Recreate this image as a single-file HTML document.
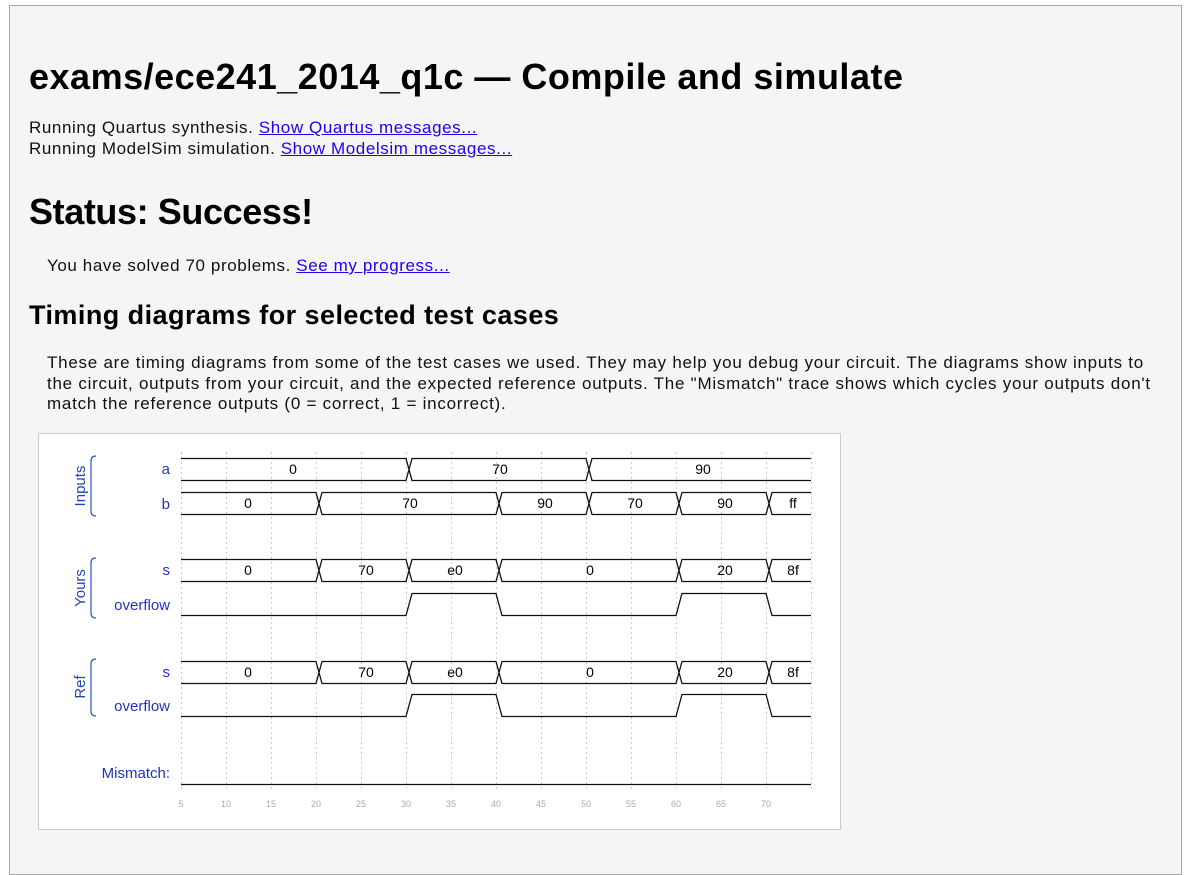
<!DOCTYPE html>
<html><head><meta charset="utf-8"><style>
html,body{margin:0;padding:0;background:#fff;}
#page{position:absolute;left:9px;top:5px;width:1173px;height:870px;background:#f5f5f5;border:1px solid #aaa;box-sizing:border-box;}
.t{position:absolute;white-space:nowrap;font-family:"Liberation Sans",sans-serif;color:#111;}
a{color:#2200ee;text-decoration:underline;}
</style></head><body>
<div id="page"></div>
<div class="t" style="left:29px;top:56px;font-size:36px;font-weight:bold;color:#000;letter-spacing:0.5px">exams/ece241_2014_q1c — Compile and simulate</div>
<div class="t" style="left:29px;top:117px;font-size:17px;line-height:21px;letter-spacing:0.6px">Running Quartus synthesis. <a>Show Quartus messages...</a><br>Running ModelSim simulation. <a>Show Modelsim messages...</a></div>
<div class="t" style="left:29px;top:191px;font-size:36px;font-weight:bold;color:#000;letter-spacing:-0.4px">Status: Success!</div>
<div class="t" style="left:47px;top:256px;font-size:17px;letter-spacing:0.6px">You have solved 70 problems. <a>See my progress...</a></div>
<div class="t" style="left:29px;top:300px;font-size:27px;font-weight:bold;color:#000;letter-spacing:0.45px">Timing diagrams for selected test cases</div>
<div class="t" style="left:47px;top:353px;font-size:17px;line-height:20.5px;letter-spacing:0.75px">These are timing diagrams from some of the test cases we used. They may help you debug your circuit. The diagrams show inputs to<br>the circuit, outputs from your circuit, and the expected reference outputs. The "Mismatch" trace shows which cycles your outputs don't<br>match the reference outputs (0 = correct, 1 = incorrect).</div>
<svg style="position:absolute;left:0;top:0" width="1192" height="866" xmlns="http://www.w3.org/2000/svg">
<rect x="38.5" y="433.5" width="802" height="396" fill="#fff" stroke="#ccc"/>
<g stroke="#ccc" stroke-dasharray="2,3" stroke-width="1">
<line x1="181.5" y1="452" x2="181.5" y2="792"/><line x1="226.5" y1="452" x2="226.5" y2="792"/><line x1="271.5" y1="452" x2="271.5" y2="792"/><line x1="316.5" y1="452" x2="316.5" y2="792"/><line x1="361.5" y1="452" x2="361.5" y2="792"/><line x1="406.5" y1="452" x2="406.5" y2="792"/><line x1="451.5" y1="452" x2="451.5" y2="792"/><line x1="496.5" y1="452" x2="496.5" y2="792"/><line x1="541.5" y1="452" x2="541.5" y2="792"/><line x1="586.5" y1="452" x2="586.5" y2="792"/><line x1="631.5" y1="452" x2="631.5" y2="792"/><line x1="676.5" y1="452" x2="676.5" y2="792"/><line x1="721.5" y1="452" x2="721.5" y2="792"/><line x1="766.5" y1="452" x2="766.5" y2="792"/><line x1="811.5" y1="452" x2="811.5" y2="792"/>
</g>
<g fill="none" stroke="#111" stroke-width="1.3">
<path d="M181 458.5H406L412 480.5H586L592 458.5H811M181 480.5H406L412 458.5H586L592 480.5H811"/>
<path d="M181 492.5H316L322 514.5H496L502 492.5H586L592 514.5H676L682 492.5H766L772 514.5H811M181 514.5H316L322 492.5H496L502 514.5H586L592 492.5H676L682 514.5H766L772 492.5H811"/>
<path d="M181 559.5H316L322 581.5H406L412 559.5H496L502 581.5H676L682 559.5H766L772 581.5H811M181 581.5H316L322 559.5H406L412 581.5H496L502 559.5H676L682 581.5H766L772 559.5H811"/>
<path d="M181 615.5H406L412 593.5H496L502 615.5H676L682 593.5H766L772 615.5H811"/>
<path d="M181 661.5H316L322 683.5H406L412 661.5H496L502 683.5H676L682 661.5H766L772 683.5H811M181 683.5H316L322 661.5H406L412 683.5H496L502 661.5H676L682 683.5H766L772 661.5H811"/>
<path d="M181 716.5H406L412 694.5H496L502 716.5H676L682 694.5H766L772 716.5H811"/>
<path d="M181 784.5H811"/>
</g>
<g font-family="Liberation Sans, Arial, sans-serif" font-size="14" fill="#000" text-anchor="middle">
<text x="293" y="474">0</text><text x="500" y="474">70</text><text x="703" y="474">90</text>
<text x="248" y="508">0</text><text x="410" y="508">70</text><text x="545" y="508">90</text><text x="635" y="508">70</text><text x="725" y="508">90</text><text x="793" y="508">ff</text>
<text x="248" y="575">0</text><text x="366" y="575">70</text><text x="455" y="575">e0</text><text x="590" y="575">0</text><text x="725" y="575">20</text><text x="793" y="575">8f</text>
<text x="248" y="677">0</text><text x="366" y="677">70</text><text x="455" y="677">e0</text><text x="590" y="677">0</text><text x="725" y="677">20</text><text x="793" y="677">8f</text>
</g>
<g font-family="Liberation Sans, Arial, sans-serif" font-size="15" fill="#2233bb" text-anchor="end">
<text x="170" y="474">a</text><text x="170" y="509">b</text><text x="170" y="575">s</text><text x="170" y="610">overflow</text><text x="170" y="677">s</text><text x="170" y="711">overflow</text><text x="170" y="778">Mismatch:</text>
</g>
<g font-family="Liberation Sans, Arial, sans-serif" font-size="15" fill="#2244bb" text-anchor="middle">
<text transform="translate(85,486) rotate(-90)">Inputs</text>
<text transform="translate(85,588) rotate(-90)">Yours</text>
<text transform="translate(85,687) rotate(-90)">Ref</text>
</g>
<g fill="none" stroke="#2255cc" stroke-width="1.2">
<path d="M96 456Q91 456 91 461V511Q91 516 96 516"/>
<path d="M96 558Q91 558 91 563V613Q91 618 96 618"/>
<path d="M96 659Q91 659 91 664V711Q91 716 96 716"/>
</g>
<g font-family="Liberation Sans, Arial, sans-serif" font-size="9" fill="#aaa" text-anchor="middle">
<text x="181" y="807">5</text><text x="226" y="807">10</text><text x="271" y="807">15</text><text x="316" y="807">20</text><text x="361" y="807">25</text><text x="406" y="807">30</text><text x="451" y="807">35</text><text x="496" y="807">40</text><text x="541" y="807">45</text><text x="586" y="807">50</text><text x="631" y="807">55</text><text x="676" y="807">60</text><text x="721" y="807">65</text><text x="766" y="807">70</text>
</g>
</svg>
</body></html>
